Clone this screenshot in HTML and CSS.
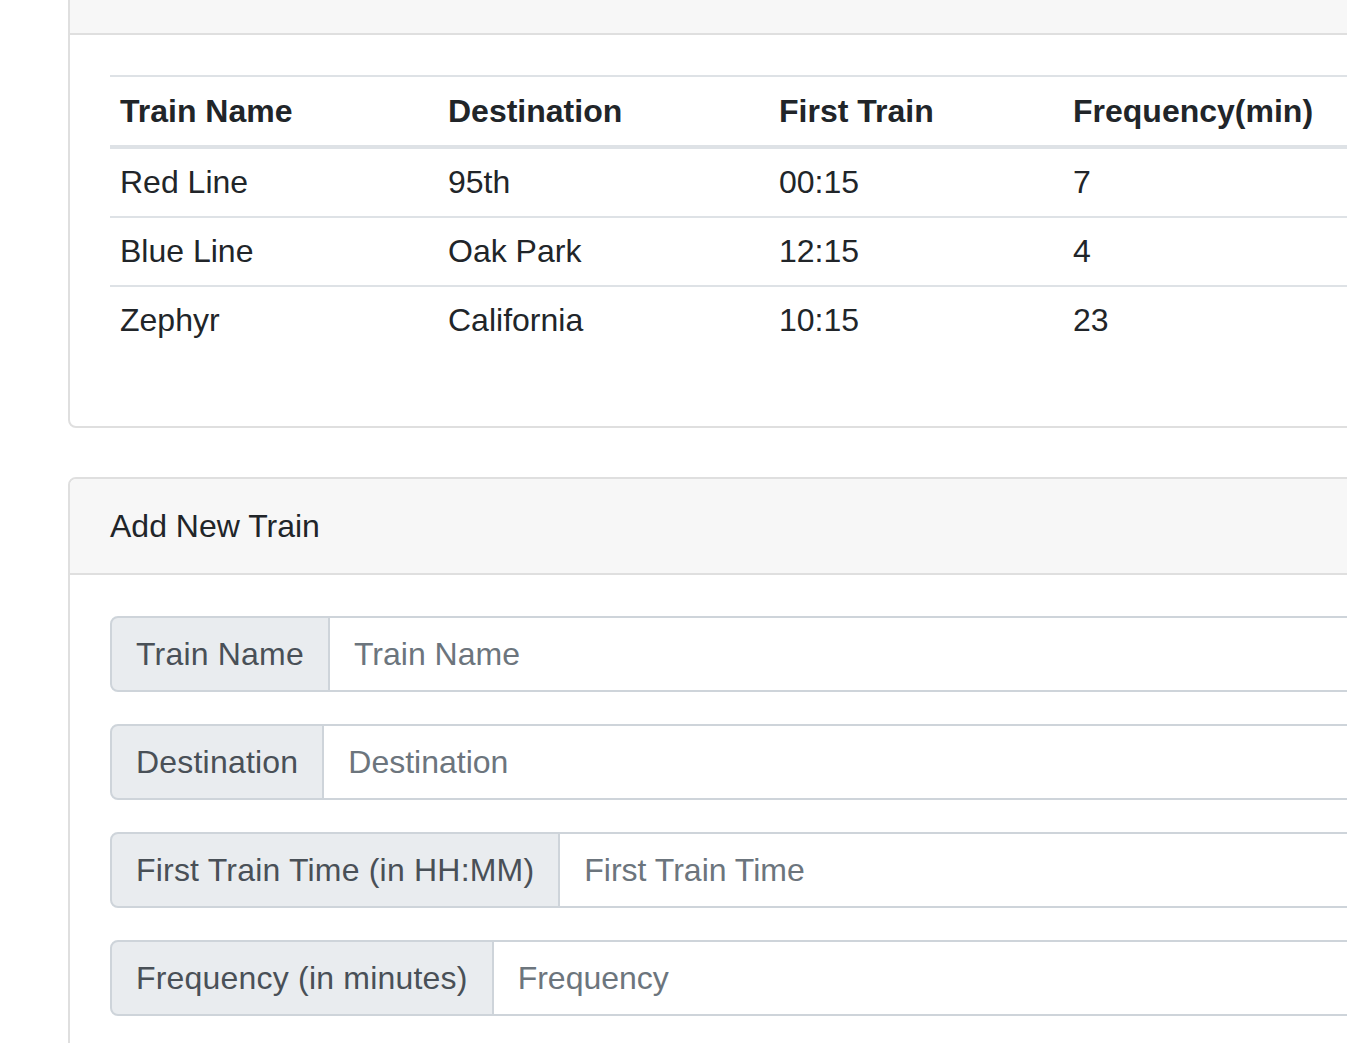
FILE: index.html
```html
<!DOCTYPE html>
<html>
<head>
<meta charset="utf-8">
<link rel="stylesheet" href="styles.css">
</head>
<body>
<div class="container">
  <div class="card card-top">
    <div class="card-header">&nbsp;</div>
    <div class="card-body">
      <table class="table">
        <thead>
          <tr><th class="c1">Train Name</th><th class="c2">Destination</th><th class="c3">First Train</th><th class="c4">Frequency(min)</th></tr>
        </thead>
        <tbody>
          <tr><td>Red Line</td><td>95th</td><td>00:15</td><td>7</td></tr>
          <tr><td>Blue Line</td><td>Oak Park</td><td>12:15</td><td>4</td></tr>
          <tr><td>Zephyr</td><td>California</td><td>10:15</td><td>23</td></tr>
        </tbody>
      </table>
    </div>
  </div>
  <div class="card card-form">
    <div class="card-header">Add New Train</div>
    <div class="card-body">
      <div class="input-group">
        <span class="input-group-text">Train Name</span>
        <input class="form-control" type="text" placeholder="Train Name">
      </div>
      <div class="input-group">
        <span class="input-group-text">Destination</span>
        <input class="form-control" type="text" placeholder="Destination">
      </div>
      <div class="input-group">
        <span class="input-group-text">First Train Time (in HH:MM)</span>
        <input class="form-control" type="text" placeholder="First Train Time">
      </div>
      <div class="input-group">
        <span class="input-group-text">Frequency (in minutes)</span>
        <input class="form-control" type="text" placeholder="Frequency">
      </div>
    </div>
  </div>
</div>
</body>
</html>
```
FILE: styles.css
```css
html, body {
  margin: 0;
  padding: 0;
  overflow: hidden;
  background: #fff;
}
body {
  font-family: "Liberation Sans", Arial, sans-serif;
  font-size: 32px;
  line-height: 1.5;
  color: #212529;
}
.container {
  padding-left: 68px;
  width: 1600px;
}
.card {
  border: 2px solid #dfdfdf;
  border-radius: 8px;
  background: #fff;
  overflow: hidden;
}
.card-top {
  margin-top: -63px;
  margin-bottom: 49px;
}
.card-header {
  background: #f7f7f7;
  border-bottom: 2px solid #dfdfdf;
  padding: 23px 40px 23px;
  line-height: 48px;
}
.card-body {
  padding: 40px;
}
.card-form .card-body {
  padding-top: 41px;
}
.table {
  border-collapse: collapse;
  margin-bottom: 32px;
  width: 1400px;
}
.table th, .table td {
  text-align: left;
  padding: 9px 10px 10px;
  line-height: 48px;
  border-top: 2px solid #dee2e6;
  vertical-align: top;
}
.table thead th {
  font-weight: bold;
  padding: 10px 10px;
  border-bottom: 4px solid #dee2e6;
}
.table tbody tr:first-child td {
  border-top: none;
}
.c1 { width: 308px; }
.c2 { width: 311px; }
.c3 { width: 274px; }
.input-group {
  display: flex;
  height: 76px;
  margin-bottom: 32px;
}
.input-group-text {
  display: flex;
  align-items: center;
  padding: 0 24px;
  background: #e9ecef;
  border: 2px solid #ced4da;
  border-radius: 8px 0 0 8px;
  color: #495057;
  white-space: nowrap;
  box-sizing: border-box;
  height: 76px;
  letter-spacing: 0.2px;
}
.form-control {
  flex: 1;
  box-sizing: border-box;
  height: 76px;
  margin: 0;
  border: 2px solid #ced4da;
  border-left: none;
  border-radius: 0 8px 8px 0;
  padding: 0 24px;
  font-family: "Liberation Sans", Arial, sans-serif;
  font-size: 32px;
  color: #495057;
  background: #fff;
  outline: none;
}
.form-control::placeholder {
  color: #6c757d;
  opacity: 1;
}
```
